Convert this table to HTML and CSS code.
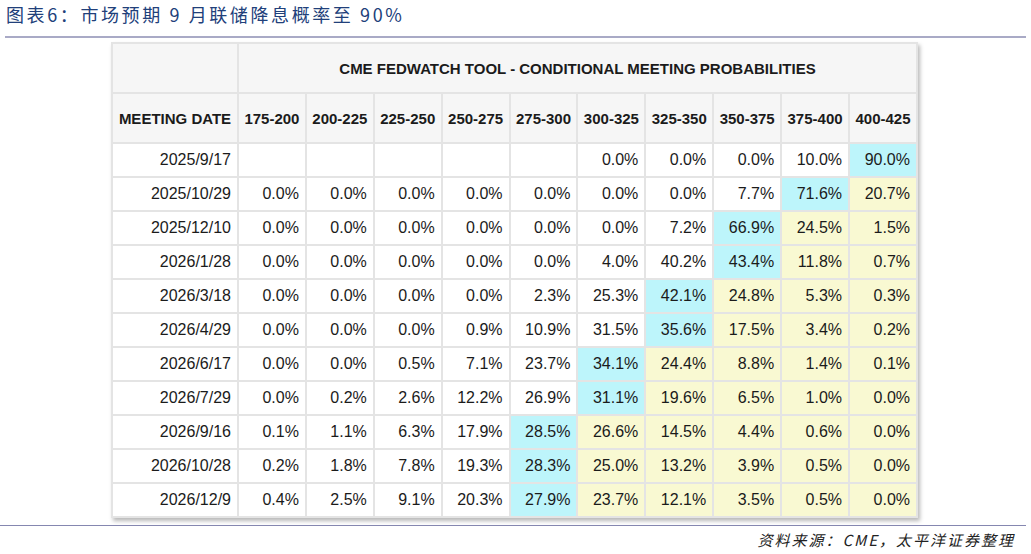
FILE: index.html
```html
<!DOCTYPE html>
<html lang="zh">
<head>
<meta charset="utf-8">
<title>图表6</title>
<link rel="stylesheet" href="styles.css">
</head>
<body>
<div class="page">
  <h1 class="title">图表6：市场预期 9 月联储降息概率至 90%</h1>
  <div class="rule-top"></div>
  <div class="table-wrap">
    <table class="fw">
      <colgroup>
        <col class="c-date">
        <col><col><col><col><col><col><col><col><col><col>
      </colgroup>
      <thead>
        <tr class="h1">
          <th></th>
          <th colspan="10">CME FEDWATCH TOOL - CONDITIONAL MEETING PROBABILITIES</th>
        </tr>
        <tr class="h2">
          <th>MEETING DATE</th>
          <th>175-200</th><th>200-225</th><th>225-250</th><th>250-275</th><th>275-300</th>
          <th>300-325</th><th>325-350</th><th>350-375</th><th>375-400</th><th>400-425</th>
        </tr>
      </thead>
      <tbody>
        <tr><td>2025/9/17</td><td></td><td></td><td></td><td></td><td></td><td>0.0%</td><td>0.0%</td><td>0.0%</td><td>10.0%</td><td class="c">90.0%</td></tr>
        <tr><td>2025/10/29</td><td>0.0%</td><td>0.0%</td><td>0.0%</td><td>0.0%</td><td>0.0%</td><td>0.0%</td><td>0.0%</td><td>7.7%</td><td class="c">71.6%</td><td class="y">20.7%</td></tr>
        <tr><td>2025/12/10</td><td>0.0%</td><td>0.0%</td><td>0.0%</td><td>0.0%</td><td>0.0%</td><td>0.0%</td><td>7.2%</td><td class="c">66.9%</td><td class="y">24.5%</td><td class="y">1.5%</td></tr>
        <tr><td>2026/1/28</td><td>0.0%</td><td>0.0%</td><td>0.0%</td><td>0.0%</td><td>0.0%</td><td>4.0%</td><td>40.2%</td><td class="c">43.4%</td><td class="y">11.8%</td><td class="y">0.7%</td></tr>
        <tr><td>2026/3/18</td><td>0.0%</td><td>0.0%</td><td>0.0%</td><td>0.0%</td><td>2.3%</td><td>25.3%</td><td class="c">42.1%</td><td class="y">24.8%</td><td class="y">5.3%</td><td class="y">0.3%</td></tr>
        <tr><td>2026/4/29</td><td>0.0%</td><td>0.0%</td><td>0.0%</td><td>0.9%</td><td>10.9%</td><td>31.5%</td><td class="c">35.6%</td><td class="y">17.5%</td><td class="y">3.4%</td><td class="y">0.2%</td></tr>
        <tr><td>2026/6/17</td><td>0.0%</td><td>0.0%</td><td>0.5%</td><td>7.1%</td><td>23.7%</td><td class="c">34.1%</td><td class="y">24.4%</td><td class="y">8.8%</td><td class="y">1.4%</td><td class="y">0.1%</td></tr>
        <tr><td>2026/7/29</td><td>0.0%</td><td>0.2%</td><td>2.6%</td><td>12.2%</td><td>26.9%</td><td class="c">31.1%</td><td class="y">19.6%</td><td class="y">6.5%</td><td class="y">1.0%</td><td class="y">0.0%</td></tr>
        <tr><td>2026/9/16</td><td>0.1%</td><td>1.1%</td><td>6.3%</td><td>17.9%</td><td class="c">28.5%</td><td class="y">26.6%</td><td class="y">14.5%</td><td class="y">4.4%</td><td class="y">0.6%</td><td class="y">0.0%</td></tr>
        <tr><td>2026/10/28</td><td>0.2%</td><td>1.8%</td><td>7.8%</td><td>19.3%</td><td class="c">28.3%</td><td class="y">25.0%</td><td class="y">13.2%</td><td class="y">3.9%</td><td class="y">0.5%</td><td class="y">0.0%</td></tr>
        <tr><td>2026/12/9</td><td>0.4%</td><td>2.5%</td><td>9.1%</td><td>20.3%</td><td class="c">27.9%</td><td class="y">23.7%</td><td class="y">12.1%</td><td class="y">3.5%</td><td class="y">0.5%</td><td class="y">0.0%</td></tr>
      </tbody>
    </table>
  </div>
  <div class="rule-bottom"></div>
  <p class="source">资料来源：CME，太平洋证券整理</p>
</div>
</body>
</html>
```

FILE: styles.css
```css
html, body {
  margin: 0;
  padding: 0;
  background: #ffffff;
}

.page {
  width: 1031px;
  height: 554px;
  overflow: hidden;
}

.title {
  margin: 0;
  padding: 2px 0 0 6px;
  height: 33px;
  box-sizing: border-box;
  font-family: "Noto Sans CJK SC", "Noto Sans", sans-serif;
  font-weight: 400;
  font-size: 18px;
  line-height: 24px;
  letter-spacing: 2.6px;
  color: #21407a;
}

.rule-top {
  margin: 3px 5px 0 5px;
  height: 2px;
  background: #a9aac6;
}

.table-wrap {
  padding: 4px 0 0 111px;
}

.fw {
  table-layout: fixed;
  width: 807px;
  border-collapse: separate;
  border-spacing: 2px;
  background: #e4e4e4;
  box-shadow: 2px 3px 4px rgba(0, 0, 0, 0.28);
  font-family: "Liberation Sans", Arial, sans-serif;
  color: #1b1b1b;
}

.c-date {
  width: 124px;
}

.fw th,
.fw td {
  white-space: nowrap;
  overflow: hidden;
}

.fw th {
  background: #f6f6f6;
  font-weight: 700;
  font-size: 15px;
  text-align: center;
  height: 48px;
  padding: 0;
}

.fw td {
  background: #ffffff;
  font-size: 16px;
  text-align: right;
  height: 32px;
  padding: 0 6px 0 0;
}

.fw td.c {
  background: #bdf5fb;
}

.fw td.y {
  background: #f9f9d2;
}

.rule-bottom {
  margin: 7px 5px 0 0;
  height: 1px;
  background: #8587b0;
}

.source {
  margin: 0;
  padding: 4px 16px 0 0;
  text-align: right;
  font-family: "Noto Sans CJK SC", sans-serif;
  font-style: italic;
  font-size: 15px;
  line-height: 20px;
  letter-spacing: 2px;
  color: #222222;
}
```
